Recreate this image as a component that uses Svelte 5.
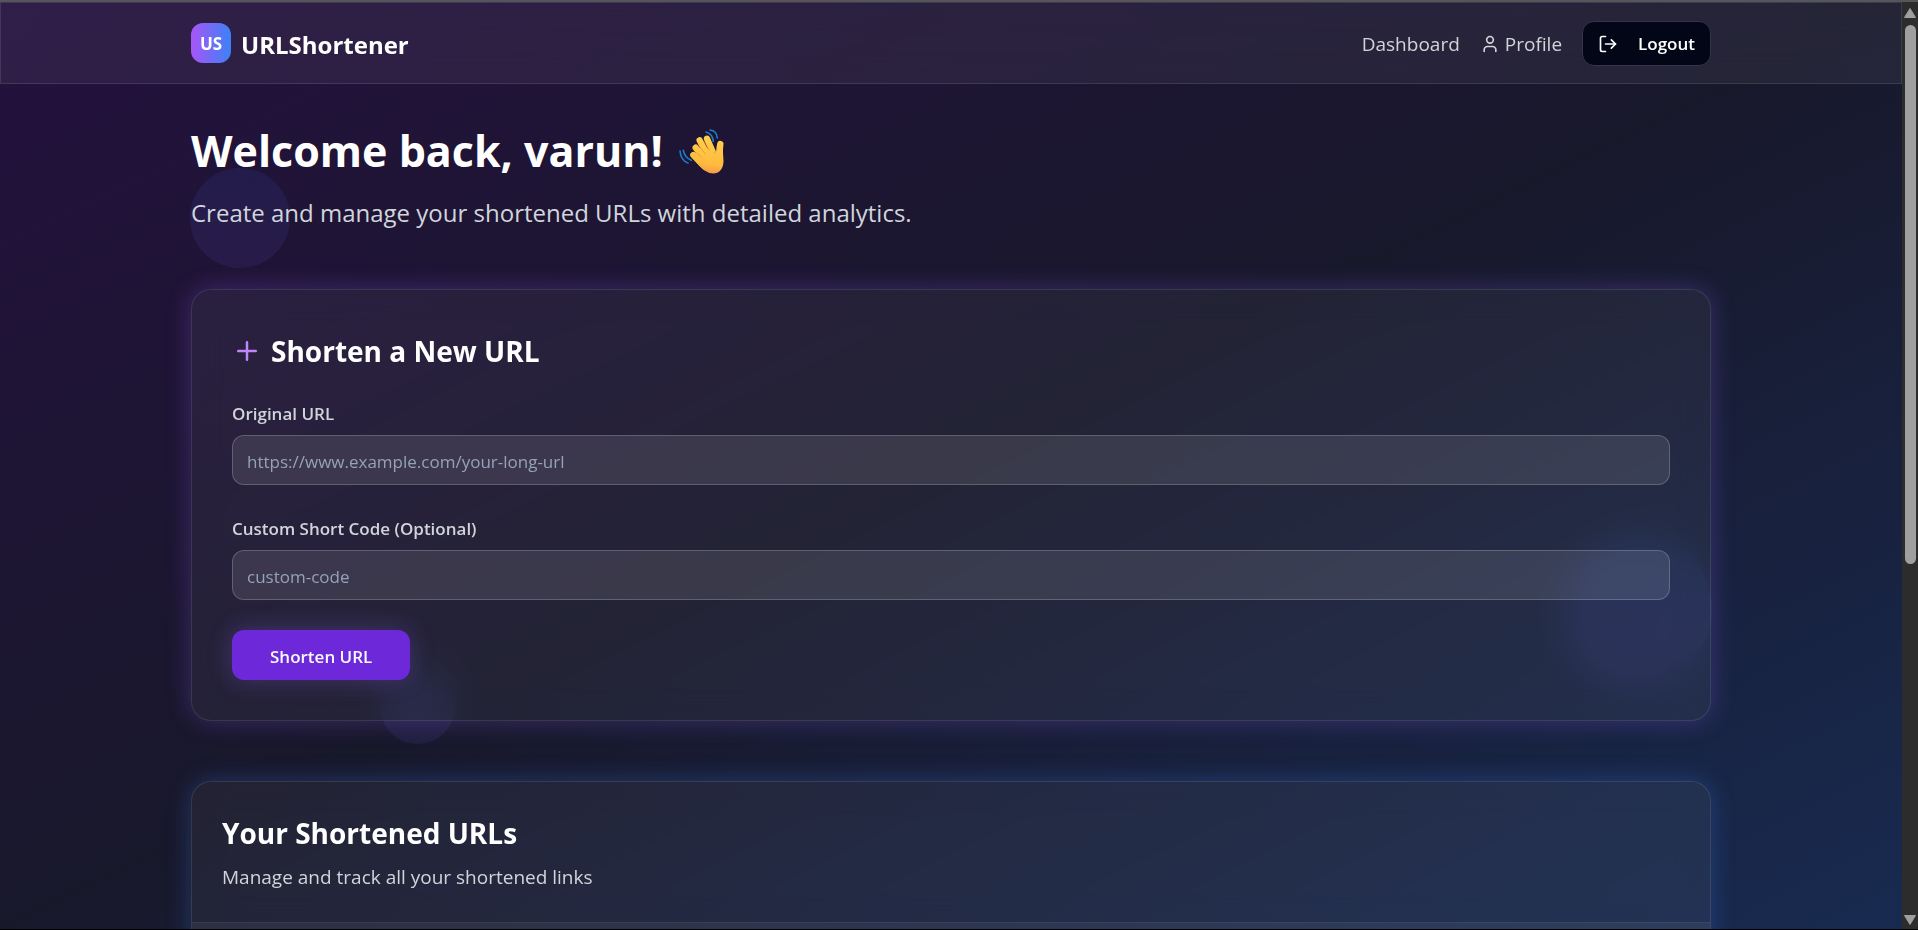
<script>
  let originalUrl = $state('');
  let customCode = $state('');
</script>

<div class="window">
  <div class="page">
    <div class="shape shape-one"></div>
    <div class="shape shape-two"></div>
    <div class="shape shape-three"></div>

    <nav class="navbar">
      <div class="container nav-row">
        <a class="brand" href="#home">
          <span class="logo">US</span>
          <span class="brand-name">URLShortener</span>
        </a>
        <div class="nav-links">
          <a href="#dashboard">Dashboard</a>
          <a class="with-icon" href="#profile">
            <svg class="icon" viewBox="0 0 24 24" aria-hidden="true">
              <path d="M19 21v-2a4 4 0 0 0-4-4H9a4 4 0 0 0-4 4v2" />
              <circle cx="12" cy="7" r="4" />
            </svg>
            Profile
          </a>
          <button class="logout" type="button">
            <svg class="icon" viewBox="0 0 24 24" aria-hidden="true">
              <path d="M9 21H5a2 2 0 0 1-2-2V5a2 2 0 0 1 2-2h4" />
              <path d="m16 17 5-5-5-5" />
              <path d="M21 12H9" />
            </svg>
            Logout
          </button>
        </div>
      </div>
    </nav>

    <main class="container">
      <header class="welcome">
        <h1>
          Welcome back, varun!
          <svg class="wave" viewBox="0 0 135 135" aria-hidden="true">
            <defs>
              <linearGradient id="skin" gradientUnits="userSpaceOnUse" x1="100" y1="15" x2="84" y2="134">
                <stop offset="0" stop-color="#ffd24d" />
                <stop offset="0.75" stop-color="#ffbb3e" />
                <stop offset="1" stop-color="#f5954a" />
              </linearGradient>
            </defs>
            <g fill="none" stroke="#1d7cc4" stroke-width="5" stroke-linecap="round">
              <path d="M93 3q20 2 22 24" />
              <path d="M81 9q20 6 22 28" />
              <path d="M3 66q3 29 24 36" />
              <path d="M13 64q4 22 24 30" />
            </g>
            <g fill="none" stroke="url(#skin)" stroke-width="19" stroke-linecap="round">
              <path d="M43 78 76 112" />
              <path d="M50 56 84 98" />
              <path d="M62 34 90 88" />
              <path d="M84 29 108 84" />
              <path d="M124 45Q119 62 123 100" />
            </g>
            <path
              fill="url(#skin)"
              d="M50 72 72 48 105 72Q113 72 114 58L133 50Q131 62 133 88 136 122 115 131 96 138 75 124 58 110 44 91Z"
            />
            <g fill="none" stroke="#e58b2e" stroke-width="2.5" stroke-linecap="round" opacity="0.75">
              <path d="M54 71 66 84" />
              <path d="M60 50 78 74" />
              <path d="M74 36 91 64" />
              <path d="M105 72Q113 71 114 58" />
            </g>
          </svg>
        </h1>
        <p>Create and manage your shortened URLs with detailed analytics.</p>
      </header>

      <section class="card create">
        <h2>
          <svg class="plus" viewBox="0 0 24 24" aria-hidden="true">
            <path d="M5 12h14M12 5v14" />
          </svg>
          Shorten a New URL
        </h2>
        <form onsubmit={(event) => event.preventDefault()}>
          <div class="field">
            <label for="original-url">Original URL</label>
            <input
              id="original-url"
              type="url"
              placeholder="https://www.example.com/your-long-url"
              bind:value={originalUrl}
            />
          </div>
          <div class="field">
            <label for="custom-code">Custom Short Code (Optional)</label>
            <input id="custom-code" type="text" placeholder="custom-code" bind:value={customCode} />
          </div>
          <button class="submit" type="submit">Shorten URL</button>
        </form>
      </section>

      <section class="card list">
        <div class="list-head">
          <h2>Your Shortened URLs</h2>
          <p>Manage and track all your shortened links</p>
        </div>
        <div class="list-body"></div>
      </section>
    </main>
  </div>

  <div class="scrollbar" aria-hidden="true">
    <svg viewBox="0 0 16 12"><path d="M8 1.500 13.500 10.500h-11z" /></svg>
    <div class="track"><div class="thumb"></div></div>
    <svg viewBox="0 0 16 12"><path d="M8 10.500 13.500 1.500h-11z" /></svg>
  </div>
</div>

<style>
  :global(body) {
    margin: 0;
    background: #000;
  }

  .window {
    box-sizing: border-box;
    height: 100vh;
    display: grid;
    grid-template-columns: minmax(0, 1fr) 16px;
    overflow: hidden;
    border-top: 2px solid #55555a;
    border-bottom: 1px solid #000;
    color: #fff;
    font-family: 'Segoe UI', 'Open Sans', 'Noto Sans', sans-serif;
  }

  .page {
    position: relative;
    overflow: hidden;
    background: linear-gradient(to bottom right, #24113e 0%, #18182b 50%, #182a50 100%);
  }

  .container {
    box-sizing: border-box;
    width: 80%;
    max-width: 1520px;
    margin: 0 auto;
  }

  .shape {
    position: absolute;
    border-radius: 50%;
    background: linear-gradient(180deg, #3b72f6, #7b5cf6);
    opacity: 0.1;
  }

  .shape-one {
    left: 10%;
    top: 166px;
    width: 100px;
    height: 100px;
  }

  .shape-two {
    left: 20%;
    top: 667px;
    width: 75px;
    height: 75px;
  }

  .shape-three {
    right: 10%;
    top: 533px;
    width: 150px;
    height: 150px;
  }

  .navbar {
    position: relative;
    border: 1px solid rgba(255, 255, 255, 0.1);
    background: rgba(255, 255, 255, 0.06);
    backdrop-filter: blur(16px);
  }

  .nav-row {
    height: 80px;
    display: flex;
    align-items: center;
    justify-content: space-between;
  }

  .brand,
  .nav-links,
  .with-icon {
    display: flex;
    align-items: center;
  }

  .brand {
    gap: 10px;
    color: #fff;
    text-decoration: none;
    font-weight: 700;
  }

  .logo {
    display: grid;
    place-items: center;
    width: 40px;
    height: 40px;
    border-radius: 12px;
    background: linear-gradient(90deg, #a855f7, #3b82f6);
    font-size: 17px;
  }

  .brand-name {
    padding-top: 2px;
    font-size: 24px;
  }

  .nav-links {
    gap: 20px;
    padding-top: 1px;
    font-size: 19px;
  }

  .nav-links a {
    color: #d1d5db;
    text-decoration: none;
  }

  .with-icon {
    gap: 5px;
  }

  .icon {
    width: 20px;
    height: 20px;
    fill: none;
    stroke: currentColor;
    stroke-width: 2;
    stroke-linecap: round;
    stroke-linejoin: round;
  }

  button,
  input {
    box-sizing: border-box;
    font-family: inherit;
    font-size: 17px;
  }

  .logout {
    display: flex;
    align-items: center;
    gap: 20px;
    height: 45px;
    padding: 0 15px;
    border: 1px solid #363548;
    border-radius: 12px;
    background: #020617;
    color: #fff;
    font-weight: 600;
  }

  main {
    position: relative;
    padding-top: 40px;
  }

  h1,
  h2,
  p {
    margin: 0;
  }

  .welcome {
    display: grid;
    gap: 16px;
    margin-bottom: 58px;
  }

  h1 {
    display: flex;
    align-items: center;
    gap: 16px;
    font-size: 43px;
    line-height: 54px;
  }

  .wave {
    width: 45px;
    height: 45px;
  }

  .welcome p {
    color: #d1d5db;
    font-size: 24px;
    line-height: 37px;
  }

  .card {
    border: 1px solid rgba(255, 255, 255, 0.1);
    border-radius: 20px;
    background: rgba(255, 255, 255, 0.05);
    backdrop-filter: blur(16px);
  }

  .create {
    padding: 40px;
    margin-bottom: 60px;
    box-shadow: 0 0 25px rgba(139, 92, 246, 0.3);
  }

  h2 {
    font-size: 28px;
    line-height: 42px;
  }

  .create h2 {
    display: flex;
    align-items: center;
    gap: 9px;
    margin-bottom: 28px;
  }

  .plus {
    width: 30px;
    height: 30px;
    fill: none;
    stroke: #c084fc;
    stroke-width: 2;
    stroke-linecap: round;
  }

  form {
    display: grid;
    gap: 30px;
  }

  .field {
    display: grid;
    gap: 8px;
  }

  label {
    justify-self: start;
    color: #d1d5db;
    font-size: 17px;
    font-weight: 600;
    line-height: 27px;
  }

  input {
    width: 100%;
    height: 50px;
    padding: 2px 14px 0;
    border: 1px solid rgba(255, 255, 255, 0.2);
    border-radius: 12px;
    outline: none;
    background: rgba(255, 255, 255, 0.1);
    color: #fff;
  }

  input::placeholder {
    color: #94a3b8;
    opacity: 1;
  }

  .submit {
    justify-self: start;
    height: 50px;
    padding: 2px 38px 0;
    border: 0;
    border-radius: 12px;
    background: #6d28d9;
    color: #f8fafc;
    font-weight: 600;
    box-shadow: 0 0 25px rgba(139, 92, 246, 0.3);
  }

  .list {
    min-height: 400px;
    box-shadow: 0 0 25px rgba(59, 130, 246, 0.3);
  }

  .list-head {
    display: grid;
    gap: 8px;
    padding: 30px;
    border-bottom: 1px solid rgba(255, 255, 255, 0.1);
  }

  .list-head p {
    color: #d1d5db;
    font-size: 19px;
    line-height: 30px;
  }

  .list-body {
    min-height: 60px;
    background: rgba(255, 255, 255, 0.05);
  }

  .scrollbar {
    display: flex;
    flex-direction: column;
    gap: 6px;
    padding: 5px 0 3px;
    background: #2c2c2c;
  }

  .scrollbar svg {
    width: 16px;
    height: 12px;
    fill: #9f9f9f;
    stroke: #9f9f9f;
    stroke-width: 1;
    stroke-linejoin: round;
  }

  .track {
    flex: 1;
    padding: 0 2px 0 3px;
  }

  .thumb {
    height: 61%;
    border-radius: 6px;
    background: #9f9f9f;
  }
</style>
